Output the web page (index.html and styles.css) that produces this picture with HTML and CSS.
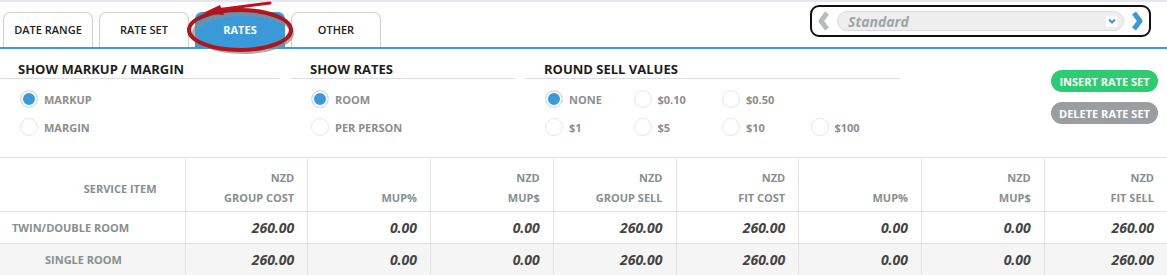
FILE: index.html
```html
<!DOCTYPE html>
<html lang="en">
<head>
  <meta charset="UTF-8">
  <title>Rates</title>
  <link rel="stylesheet" href="styles.css">
</head>
<body>
  <div class="page">
    <div class="tabbar">
      <div class="tabs">
        <div class="tab">DATE RANGE</div>
        <div class="tab">RATE SET</div>
        <div class="tab active">RATES</div>
        <div class="tab">OTHER</div>
      </div>
      <div class="rateset">
        <svg class="chev" width="14" height="20" viewBox="0 0 14 20"><path d="M10 2 L4 10 L10 18" fill="none" stroke="#b8bcbf" stroke-width="5" stroke-linejoin="round"/></svg>
        <div class="rateset-select">
          <span>Standard</span>
          <span class="caret"><svg width="10" height="8" viewBox="0 0 10 8"><path d="M2 2.5 L5 5.5 L8 2.5" fill="none" stroke="#3a9ad9" stroke-width="2"/></svg></span>
        </div>
        <svg class="chev" width="14" height="20" viewBox="0 0 14 20"><path d="M4 2 L10 10 L4 18" fill="none" stroke="#3a9ad9" stroke-width="5" stroke-linejoin="round"/></svg>
      </div>
      <!-- red marker drawn over the RATES tab -->
      <svg class="annotation" width="130" height="62" viewBox="180 0 130 62">
        <ellipse cx="243" cy="33" rx="49" ry="19" fill="none" stroke="#8a8a8a" stroke-width="4" opacity="0.7"/>
        <ellipse cx="240" cy="30" rx="51" ry="20" fill="none" stroke="#b3141a" stroke-width="4"/>
        <path d="M270 3 L216 10" fill="none" stroke="#c0141a" stroke-width="3" stroke-linecap="round"/>
        <polygon points="203,13 220,5 224,15" fill="#b3141a"/>
      </svg>
    </div>

    <div class="options">
      <div class="group group-markup">
        <h3>SHOW MARKUP / MARGIN</h3>
        <div class="radios">
          <label class="radio checked"><span class="dot"></span>MARKUP</label>
          <label class="radio"><span class="dot"></span>MARGIN</label>
        </div>
      </div>
      <div class="group group-rates">
        <h3>SHOW RATES</h3>
        <div class="radios">
          <label class="radio checked"><span class="dot"></span>ROOM</label>
          <label class="radio"><span class="dot"></span>PER PERSON</label>
        </div>
      </div>
      <div class="group group-round">
        <h3>ROUND SELL VALUES</h3>
        <div class="radios radios-grid">
          <label class="radio checked"><span class="dot"></span>NONE</label>
          <label class="radio"><span class="dot"></span>$0.10</label>
          <label class="radio"><span class="dot"></span>$0.50</label>
          <span></span>
          <label class="radio"><span class="dot"></span>$1</label>
          <label class="radio"><span class="dot"></span>$5</label>
          <label class="radio"><span class="dot"></span>$10</label>
          <label class="radio"><span class="dot"></span>$100</label>
        </div>
      </div>
      <div class="actions">
        <button class="btn btn-insert">INSERT RATE SET</button>
        <button class="btn btn-delete">DELETE RATE SET</button>
      </div>
    </div>

    <table class="rates">
      <colgroup>
        <col class="col-item">
        <col><col><col><col><col><col><col><col>
      </colgroup>
      <thead>
        <tr>
          <th class="item-head">SERVICE ITEM</th>
          <th><span>NZD</span><span>GROUP COST</span></th>
          <th><span>&nbsp;</span><span>MUP%</span></th>
          <th><span>NZD</span><span>MUP$</span></th>
          <th><span>NZD</span><span>GROUP SELL</span></th>
          <th><span>NZD</span><span>FIT COST</span></th>
          <th><span>&nbsp;</span><span>MUP%</span></th>
          <th><span>NZD</span><span>MUP$</span></th>
          <th><span>NZD</span><span>FIT SELL</span></th>
        </tr>
      </thead>
      <tbody>
        <tr>
          <td class="item item-twin">TWIN/DOUBLE ROOM</td>
          <td>260.00</td><td>0.00</td><td>0.00</td><td>260.00</td>
          <td>260.00</td><td>0.00</td><td>0.00</td><td>260.00</td>
        </tr>
        <tr class="alt">
          <td class="item item-single">SINGLE ROOM</td>
          <td>260.00</td><td>0.00</td><td>0.00</td><td>260.00</td>
          <td>260.00</td><td>0.00</td><td>0.00</td><td>260.00</td>
        </tr>
      </tbody>
    </table>
  </div>
</body>
</html>
```

FILE: styles.css
```css
body {
  margin: 0;
  font-family: "Open Sans", "Liberation Sans", sans-serif;
  background-color: #fff;
  color: #222;
}
.page {
  border-top: 2px solid #e6e5f5;
}
.tabbar {
  position: relative;
  display: flex;
  height: 45px;
  border-bottom: 2px solid #3a9ad9;
}
.tabs {
  display: flex;
  align-items: flex-end;
  gap: 6px;
  padding-left: 3px;
}
.tab {
  width: 90px;
  height: 35px;
  box-sizing: border-box;
  border: 1px solid #cfcfcf;
  border-bottom: none;
  border-radius: 7px 7px 0 0;
  display: flex;
  align-items: center;
  justify-content: center;
  padding-bottom: 2px;
  font-size: 11px;
  font-weight: 600;
  color: #222;
}
.tab.active {
  background-color: #3a9ad9;
  border-color: #3a9ad9;
  color: #fff;
  font-weight: 700;
}
.rateset {
  margin-left: auto;
  margin-right: 16px;
  margin-top: 3px;
  width: 341px;
  height: 32px;
  box-sizing: border-box;
  border: 2px solid #111;
  border-radius: 9px;
  display: flex;
  align-items: center;
  gap: 6px;
  padding: 0 5px 0 5px;
}
.rateset-select {
  flex: 1;
  height: 20px;
  box-sizing: border-box;
  border: 1px solid #dcdcdc;
  border-radius: 10px;
  background-color: #eeeeee;
  display: flex;
  align-items: center;
  justify-content: space-between;
  padding: 0 6px 0 10px;
}
.rateset-select span:first-child {
  font-size: 14px;
  font-weight: 700;
  font-style: italic;
  color: #9ea4a8;
}
.caret {
  width: 11px;
  height: 11px;
  background-color: #fff;
  display: flex;
  align-items: center;
  justify-content: center;
}
.annotation {
  position: absolute;
  left: 180px;
  top: -2px;
}
.options {
  display: flex;
  height: 108px;
  padding-top: 12px;
  box-sizing: border-box;
}
.group h3 {
  margin: 0;
  font-size: 13px;
  font-weight: 700;
  line-height: 17px;
  color: #1d1d1d;
  padding-left: 18px;
  border-bottom: 1px solid #dddde8;
}
.group-markup {
  width: 280px;
  margin-right: 11px;
}
.group-rates {
  width: 224px;
  margin-right: 10px;
}
.group-rates h3,
.group-round h3 {
  padding-left: 19px;
}
.group-round {
  width: 375px;
}
.radios {
  display: grid;
  grid-auto-rows: 28px;
  margin-top: 6px;
  padding-left: 20px;
}
.radios-grid {
  grid-template-columns: repeat(4, 88.5px);
}
.radio {
  display: flex;
  align-items: center;
  gap: 6px;
  font-size: 11px;
  font-weight: 700;
  color: #8d8d8d;
}
.dot {
  width: 18px;
  height: 18px;
  box-sizing: border-box;
  border: 1px solid #e6e6e6;
  border-radius: 50%;
  background-color: #fff;
}
.radio.checked .dot {
  background-color: #3a9ad9;
  box-shadow: inset 0 0 0 2px #fff;
}
.actions {
  margin-left: auto;
  margin-right: 9px;
  padding-top: 9px;
  display: flex;
  flex-direction: column;
  gap: 10px;
}
.btn {
  width: 107px;
  height: 22px;
  border: none;
  border-radius: 11px;
  font-family: inherit;
  font-size: 11px;
  font-weight: 700;
  color: #fff;
  padding: 0;
}
.btn-insert {
  background-color: #2ecc71;
}
.btn-delete {
  background-color: #9a9ea1;
}
.rates {
  width: 100%;
  border-collapse: collapse;
  table-layout: fixed;
}
.col-item {
  width: 185px;
}
.rates th,
.rates td {
  border-top: 1px solid #e2e2e2;
  border-left: 1px solid #e2e2e2;
  text-align: right;
  padding: 0 13px 0 0;
}
.rates th:first-child,
.rates td:first-child {
  border-left: none;
}
.rates th {
  height: 45px;
  vertical-align: bottom;
  padding-bottom: 5px;
  font-size: 11px;
  font-weight: 700;
  color: #85908f;
}
.rates th span {
  display: block;
  line-height: 16px;
}
.rates th span + span {
  margin-top: 4px;
}
.rates th.item-head {
  vertical-align: middle;
  padding: 8px 28px 0 0;
}
.rates td {
  height: 31px;
  font-size: 14px;
  font-weight: 700;
  font-style: italic;
  color: #444;
}
.rates td.item {
  text-align: left;
  font-size: 11px;
  font-style: normal;
  color: #85908f;
}
.rates td.item-twin {
  padding-left: 12px;
}
.rates td.item-single {
  padding-left: 45px;
}
.rates tr.alt td {
  background-color: #f5f5f5;
}
```
